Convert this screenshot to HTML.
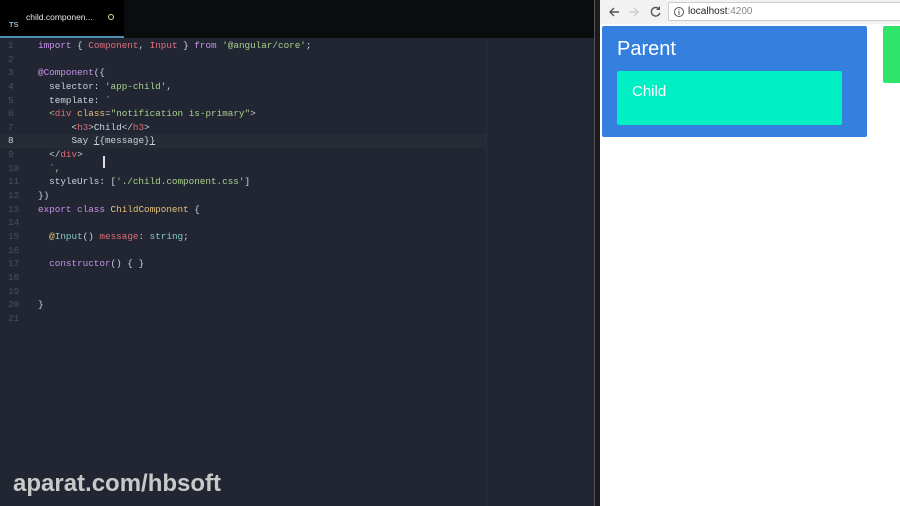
<!DOCTYPE html>
<html><head><style>
*{margin:0;padding:0;box-sizing:border-box}
html,body{width:900px;height:506px;overflow:hidden}
body{background:#222632;position:relative;font-family:"Liberation Sans",sans-serif}
#top{position:absolute;left:0;top:0;width:597px;height:38px;background:#0b0c0e}
#tab{position:absolute;left:0;top:0;width:124px;height:38px;background:#000;border-bottom:2px solid #4a8fb0}
#tab .n{position:absolute;left:26px;top:12px;color:#e8e8e8;font-size:8.5px}
#tab .ts{position:absolute;left:9px;top:20px;color:#8fb3c9;font-size:7.5px;font-weight:bold}
#tab .dot{position:absolute;left:108px;top:14px;width:6px;height:6px;border:1.5px solid #e5e08a;border-radius:50%}
#code{position:absolute;left:0;top:39px;font-family:"Liberation Mono",monospace;font-size:9.3px;line-height:13.65px;color:#cfd3dc}
.l{height:13.65px;white-space:pre;width:486px}
.ln{display:inline-block;width:38px;padding-left:8px;color:#4a5060}
.cur{background:#262b36}.cur .ln{color:#cfd3dc}
.k{color:#c792ea}.c{color:#e26d7c}.s{color:#a8d08d}.t{color:#e5c07b}.y{color:#80cbc4}.p{color:#e06c75}
#ruler{position:absolute;left:486px;top:39px;width:1px;height:467px;background:#2c303c}
#wm{position:absolute;left:13px;top:470px;color:#c9c9c9;font-weight:bold;font-size:24px}
#sep{position:absolute;left:594px;top:0;width:6px;height:506px;background:#1a1c22;border-left:1px solid #555}
#br{position:absolute;left:600px;top:0;width:300px;height:506px;background:#fff}
#tb{position:absolute;left:0;top:0;width:300px;height:24px;background:#f2f2f2}
#url{position:absolute;left:68px;top:2px;width:240px;height:19px;background:#fff;border:1px solid #ccc;border-radius:2px;font-size:10px;color:#222;padding:3px 0 0 19px}
#url span{color:#888}
#parent{position:absolute;left:2px;top:26px;width:265px;height:111px;background:#3580df;border-radius:2px}
#parent .h{position:absolute;left:15px;top:12px;color:#fff;font-size:20px}
#child{position:absolute;left:17px;top:71px;width:225px;height:54px;background:#00efc5;border-radius:2px}
#child .h{position:absolute;left:15px;top:12px;color:#fff;font-size:15px}
#green{position:absolute;left:283px;top:26px;width:20px;height:57px;background:#2fe46b;border-radius:2px}
</style></head><body>
<div id="top"><div id="tab"><div class="n">child.componen...</div><div class="ts">TS</div><div class="dot"></div></div></div>
<div id="ruler"></div>
<div id="code"><div class="l"><span class="ln">1</span><span class="k">import</span> { <span class="c">Component</span>, <span class="c">Input</span> } <span class="k">from</span> <span class="s">'@angular/core'</span>;</div><div class="l"><span class="ln">2</span></div><div class="l"><span class="ln">3</span><span class="k">@Component</span>({</div><div class="l"><span class="ln">4</span>  selector: <span class="s">'app-child'</span>,</div><div class="l"><span class="ln">5</span>  template: <span class="s">`</span></div><div class="l"><span class="ln">6</span>  <span class="s">&lt;</span><span class="p">div</span> <span class="t">class</span>=<span class="s">"notification is-primary"</span>&gt;</div><div class="l"><span class="ln">7</span>      &lt;<span class="p">h3</span>&gt;Child&lt;/<span class="p">h3</span>&gt;</div><div class="l cur"><span class="ln">8</span>      Say <u>{</u>{message}<u>}</u></div><div class="l"><span class="ln">9</span>  &lt;/<span class="p">div</span>&gt;</div><div class="l"><span class="ln">10</span>  <span class="s">`,</span></div><div class="l"><span class="ln">11</span>  styleUrls: [<span class="s">'./child.component.css'</span>]</div><div class="l"><span class="ln">12</span>})</div><div class="l"><span class="ln">13</span><span class="k">export class</span> <span class="t">ChildComponent</span> {</div><div class="l"><span class="ln">14</span></div><div class="l"><span class="ln">15</span>  <span class="t">@</span><span class="y">Input</span>() <span class="p">message</span>: <span class="y">string</span>;</div><div class="l"><span class="ln">16</span></div><div class="l"><span class="ln">17</span>  <span class="k">constructor</span>() { }</div><div class="l"><span class="ln">18</span></div><div class="l"><span class="ln">19</span></div><div class="l"><span class="ln">20</span>}</div><div class="l"><span class="ln">21</span></div></div>
<div style="position:absolute;left:103px;top:156px;width:2px;height:12px;background:#ddd"></div>
<div id="wm">aparat.com/hbsoft</div>
<div id="sep"></div>
<div id="br">
<div id="tb">
<svg width="68" height="24" style="position:absolute;left:0;top:0">
<path d="M19 12H10M14 8l-4 4 4 4" stroke="#555" stroke-width="1.4" fill="none"/>
<path d="M29 12h9M34 8l4 4-4 4" stroke="#ccc" stroke-width="1.4" fill="none"/>
<path d="M59 9a4.3 4.3 0 1 0 0.8 4" stroke="#555" stroke-width="1.4" fill="none"/><path d="M60 6v4h-4" fill="#555"/>
</svg>
<div id="url"><svg width="12" height="12" style="position:absolute;left:4px;top:3px"><circle cx="6" cy="6" r="4.5" stroke="#555" fill="none"/><path d="M6 5v4M6 3.2v1" stroke="#555"/></svg>localhost<span>:4200</span></div>
</div>
<div id="parent"><div class="h">Parent</div></div>
<div id="child"><div class="h">Child</div></div>
<div id="green"></div>
</div>
</body></html>
